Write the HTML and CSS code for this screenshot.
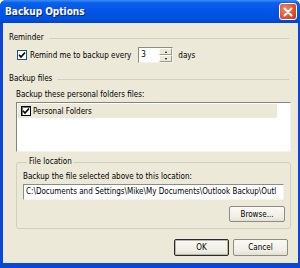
FILE: index.html
```html
<!DOCTYPE html>
<html lang="en">
<head>
    <meta charset="UTF-8">
    <title>Backup Options</title>
    <link rel="stylesheet" href="styles.css">
</head>
<body>
    <div class="window">
        <div class="titlebar">
            <span class="title">Backup Options</span>
            <button class="close-btn" aria-label="Close">
                <svg width="10" height="10" viewBox="0 0 10 10">
                    <path d="M1.5 1.5 L8.5 8.5 M8.5 1.5 L1.5 8.5" stroke="#fff" stroke-width="2" stroke-linecap="round"/>
                </svg>
            </button>
        </div>

        <div class="client">
            <div class="section-head">
                <span>Reminder</span>
                <div class="rule"></div>
            </div>

            <div class="reminder-row">
                <span class="checkbox">
                    <svg width="8" height="8" viewBox="0 0 8 8">
                        <path d="M1 3.8 L3 6 L7 1.5" fill="none" stroke="#000" stroke-width="1.6"/>
                    </svg>
                </span>
                <span class="reminder-text">Remind me to backup every</span>
                <div class="spin">
                    <span class="spin-value">3</span>
                    <div class="spin-btns">
                        <span class="spin-btn"><i class="arrow-up"></i></span>
                        <span class="spin-btn"><i class="arrow-down"></i></span>
                    </div>
                </div>
                <span>days</span>
            </div>

            <div class="section-head files-head">
                <span>Backup files</span>
                <div class="rule"></div>
            </div>

            <div class="files">
                <div class="label">Backup these personal folders files:</div>
                <div class="listbox">
                    <div class="list-item">
                        <span class="list-check">
                            <svg width="8" height="8" viewBox="0 0 8 8">
                                <path d="M1 3.8 L3 6 L7 1.5" fill="none" stroke="#000" stroke-width="1.6"/>
                            </svg>
                        </span>
                        <span>Personal Folders</span>
                    </div>
                </div>

                <fieldset class="group">
                    <legend>File location</legend>
                    <div class="label">Backup the file selected above to this location:</div>
                    <div class="path-box">C:\Documents and Settings\Mike\My Documents\Outlook Backup\Outl</div>
                    <div class="browse-row">
                        <button class="btn">Browse...</button>
                    </div>
                </fieldset>
            </div>

            <div class="dialog-buttons">
                <button class="btn btn-default">OK</button>
                <button class="btn">Cancel</button>
            </div>
        </div>
    </div>
</body>
</html>
```

FILE: styles.css
```css
* {
    margin: 0;
    padding: 0;
    box-sizing: border-box;
}

body {
    font-family: "DejaVu Sans Condensed", "DejaVu Sans", sans-serif;
    font-size: 8px;
    color: #000;
    background: #fff;
}

.window {
    width: 300px;
    height: 268px;
    background: #0A46DA;
    display: flex;
    flex-direction: column;
    border-radius: 6px 6px 0 0;
    overflow: hidden;
}

.titlebar {
    height: 23px;
    background: linear-gradient(to bottom, #3D8EF7 0%, #0B60EA 12%, #0256E6 45%, #0052DF 80%, #0043C8 100%);
    display: flex;
    align-items: center;
    justify-content: space-between;
    padding: 0 3px 0 5px;
}

.title {
    color: #fff;
    font-family: "DejaVu Sans Condensed", "DejaVu Sans", sans-serif;
    font-weight: bold;
    font-size: 10px;
    text-shadow: 1px 1px 0 #0A1E8A;
}

.close-btn {
    width: 18px;
    height: 17px;
    border: 1px solid #fff;
    border-radius: 3px;
    background: radial-gradient(circle at 35% 35%, #F08A68 0%, #E2542E 55%, #C23A17 100%);
    display: flex;
    align-items: center;
    justify-content: center;
}

.client {
    flex: 1;
    margin: 0 2px 5px 3px;
    background: #ECE9D8;
    padding: 9px 9px 0 6px;
}

.section-head {
    display: flex;
    align-items: center;
    gap: 5px;
    height: 12px;
    line-height: 12px;
}

.rule {
    flex: 1;
    border-top: 1px solid #D0D0BF;
}

.reminder-row {
    display: flex;
    align-items: center;
    height: 16px;
    margin-top: 3px;
    padding-left: 8px;
}

.checkbox,
.list-check {
    width: 10px;
    height: 10px;
    border: 1px solid #1C5180;
    background: #fff;
    display: flex;
    align-items: center;
    justify-content: center;
}

.reminder-text {
    margin-left: 3px;
    margin-right: 7px;
}

.spin {
    width: 35px;
    height: 16px;
    display: flex;
    background: #fff;
    border: 1px solid;
    border-color: #8C8C84 #F4F3EE #F4F3EE #8C8C84;
    margin-right: 5px;
}

.spin-value {
    flex: 1;
    padding-left: 2px;
    line-height: 14px;
}

.spin-btns {
    width: 13px;
    display: flex;
    flex-direction: column;
}

.spin-btn {
    flex: 1;
    background: #ECE9D8;
    border: 1px solid;
    border-color: #fff #9D9D92 #9D9D92 #fff;
    display: flex;
    align-items: center;
    justify-content: center;
}

.arrow-up,
.arrow-down {
    width: 0;
    height: 0;
    border-left: 1.5px solid transparent;
    border-right: 1.5px solid transparent;
}

.arrow-up {
    border-bottom: 2px solid #000;
}

.arrow-down {
    border-top: 2px solid #000;
}

.files-head {
    margin-top: 10px;
}

.files {
    margin: 4px -2px 0 7px;
}

.label {
    height: 12px;
    line-height: 12px;
}

.listbox {
    height: 50px;
    margin-top: 1px;
    background: #fff;
    border: 1px solid;
    border-color: #85847B #F4F3EE #F4F3EE #85847B;
    padding: 1px 0 0 1px;
}

.list-item {
    width: 259px;
    height: 14px;
    background: #ECE9D8;
    display: flex;
    align-items: center;
    gap: 2px;
    padding-left: 3px;
}

.list-check {
    border: 1px solid #000;
    box-shadow: inset 1px 1px 0 #777;
}

.group {
    min-width: 0;
    margin-top: 4px;
    border: 1px solid #D0D0BF;
    border-radius: 3px;
    padding: 3px 6px 6px 6px;
}

.group legend {
    margin-left: 4px;
    padding: 0 2px;
    line-height: 12px;
}

.path-box {
    height: 16px;
    margin-top: 1px;
    background: #fff;
    border: 1px solid;
    border-color: #8C8C84 #F4F3EE #F4F3EE #8C8C84;
    padding-left: 2px;
    line-height: 14px;
    white-space: nowrap;
    overflow: hidden;
}

.browse-row {
    display: flex;
    justify-content: flex-end;
    margin-top: 6px;
    margin-right: -1px;
}

.btn {
    width: 56px;
    height: 16px;
    font-family: inherit;
    font-size: 8px;
    color: #000;
    background: linear-gradient(to bottom, #FAF9F4 0%, #F0EEE6 70%, #E3E0D2 100%);
    border: 1px solid #8E8D85;
    border-radius: 2px;
}

.dialog-buttons {
    display: flex;
    justify-content: flex-end;
    gap: 4px;
    margin-top: 10px;
    margin-right: 1px;
}

.dialog-buttons .btn {
    width: 55px;
    height: 17px;
}

.btn-default {
    border: 1px solid #2A2A26;
    box-shadow: inset 0 0 0 1px #B9B7AC;
}
```
